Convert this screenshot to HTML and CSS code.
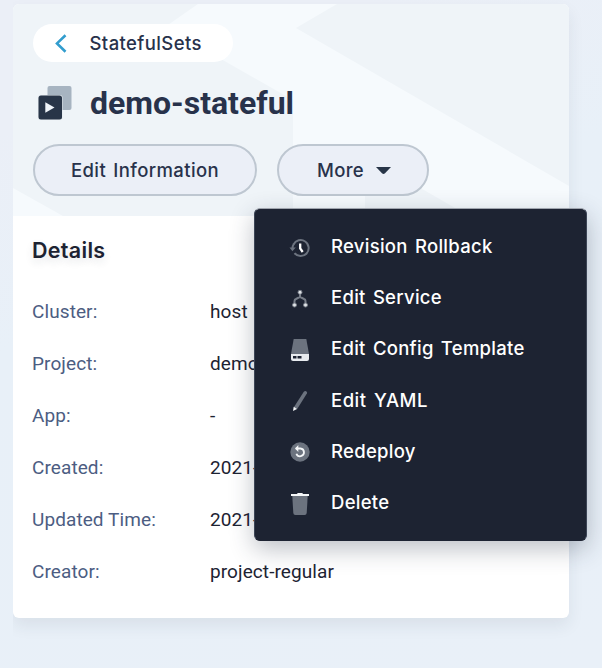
FILE: index.html
```html
<!DOCTYPE html>
<html lang="en">
<head>
<meta charset="utf-8">
<title>demo-stateful</title>
<link rel="stylesheet" href="styles.css">
</head>
<body>
<div class="pane">
<main class="card">
  <header class="hero">
    <svg class="hero-bg" viewBox="0 0 556 212" preserveAspectRatio="none" aria-hidden="true">
      <path fill="#f6fafd" d="M185 0H324L283 24L556 182V212H280V96L152 23ZM0 184L50 212H0Z"/>
      <path fill="#eff4f8" d="M352 152L456 212H352Z"/>
    </svg>
    <a class="back">
      <svg width="12" height="19" viewBox="0 0 12 19"><path d="M10.500 1.200L2 9.400l8.500 8.300" fill="none" stroke="#329dce" stroke-width="2.600"/></svg>
      <span class="back-text">StatefulSets</span>
    </a>
    <h1 class="title">
      <svg width="34" height="34" viewBox="0 0 34 34"><rect x="9.500" y="0" width="24" height="24" rx="2" fill="#a7b4c1"/><rect x="0" y="9" width="24.500" height="25" rx="2.500" fill="#e2e8ed"/><rect x=".5" y="9.500" width="23.500" height="24" rx="2.500" fill="#283548"/><path d="M7.300 16.300v10.400l9.200-5.200z" fill="#eff4f9"/></svg>
      <span class="title-text">demo-stateful</span>
    </h1>
    <div class="actions">
      <button class="btn btn-edit"><span class="edit-text">Edit Information</span></button>
      <button class="btn btn-more"><span class="more-text">More</span><svg width="15" height="8" viewBox="0 0 15 8"><path d="M0 0h15L9 6.300Q7.500 7.600 6 6.300z" fill="#283548"/></svg></button>
    </div>
  </header>
  <section class="details">
    <h2 class="heading">Details</h2>
    <dl class="list">
      <dt>Cluster:</dt><dd>host</dd>
      <dt>Project:</dt><dd>demo</dd>
      <dt>App:</dt><dd>-</dd>
      <dt>Created:</dt><dd>2021-</dd>
      <dt>Updated Time:</dt><dd>2021-</dd>
      <dt>Creator:</dt><dd>project-regular</dd>
    </dl>
  </section>
</main>
</div>
<ul class="menu">
  <li><svg viewBox="0 0 22 24"><path d="M4.500 8.500A8 8 0 1 1 5.500 17.200" fill="none" stroke="#6c737f" stroke-width="2"/><path d="M.5 11.600h6.300L3.400 15.200z" fill="#6c737f"/><path d="M3.500 12A8 8 0 0 1 4.800 8" fill="none" stroke="#6c737f" stroke-width="2"/><path d="M11.200 7.500v5l2.500 3.500" fill="none" stroke="#fff" stroke-width="2.300"/></svg><span>Revision Rollback</span></li>
  <li><svg viewBox="0 0 22 24"><path d="M11 5v5M5.500 18v-4q0-1.500 1.500-2l4-2.200 4 2.200q1.500.5 1.500 2v4" fill="none" stroke="#777d88" stroke-width="2"/><g fill="#dfe2e6" stroke="#777d88"><circle cx="11" cy="5.300" r="2"/><circle cx="5.500" cy="18" r="2"/><circle cx="16.500" cy="18" r="2"/></g></svg><span>Edit Service</span></li>
  <li><svg viewBox="0 0 22 24"><path d="M4.700 1h12.600L20 16H2z" fill="#6c737f"/><path d="M2 16h18v5q0 2-2 2H4q-2 0-2-2z" fill="#e8ebef"/><path d="M4 18h3.500v2.600H4zM8.500 18h4v2.600h-4z" fill="#1d2332"/></svg><span>Edit Config Template</span></li>
  <li><svg viewBox="0 0 22 24"><path d="M4.700 18.500L14.800 2.700q1.700-1.400 3.100.2.500.8 0 1.600L8 20.300z" fill="#6c737f"/><path d="M4.700 17.800L8 20.100 4 22z" fill="#f5f7f9"/></svg><span class="caps">Edit YAML</span></li>
  <li><svg viewBox="0 0 22 24"><circle cx="11" cy="12" r="9.700" fill="#6c737f"/><path d="M6.800 8.500h4.600a3.900 3.900 0 1 1-4 5.200" fill="none" stroke="#f5f7f9" stroke-width="1.800"/><path d="M9.300 5L6 8.500 9.300 12z" fill="#f5f7f9"/></svg><span>Redeploy</span></li>
  <li><svg viewBox="0 0 22 24"><path d="M3.300 4h15.400l-1 17q-.2 2-2 2H6.300q-1.800 0-2-2z" fill="#6c737f"/><path d="M2 2h6l.7-1h4.600l.7 1h6v2H2z" fill="#f5f7f9"/></svg><span>Delete</span></li>
</ul>
</body>
</html>
```
FILE: styles.css
```css
* { box-sizing: border-box; }
body {
  margin: 0;
  width: 602px;
  height: 668px;
  overflow: hidden;
  position: relative;
  background: linear-gradient(160deg, #ebeff7 0%, #ebeff7 15%, #e8f0f8 40%, #e9f0f8 100%);
  font-family: Inter, "Liberation Sans", sans-serif;
  color: #28324b;
}
.pane { margin-left: 13px; padding-top: 4px; height: 668px; overflow: hidden; }
.card {
  width: 556px;
  height: 614px;
  border-radius: 6px;
  background: #fff;
  box-shadow: 0 8px 16px rgba(36, 46, 66, .08);
}
.hero {
  position: relative;
  height: 212px;
  padding: 20px;
  background: #eff4f8;
  border-radius: 6px 6px 0 0;
  overflow: hidden;
}
.hero-bg { position: absolute; inset: 0; width: 100%; height: 100%; }
.back, .title, .actions { position: relative; }
.back {
  display: flex;
  align-items: center;
  width: 200px;
  height: 38px;
  padding-left: 22px;
  gap: 22.5px;
  border-radius: 19px;
  background: #fff;
  font-size: 18.5px;
  font-weight: 500;
  letter-spacing: .4px;
}
.title {
  display: flex;
  align-items: center;
  gap: 18px;
  height: 50px;
  margin: 16px 0 0;
  padding-left: 5px;
  font: 700 32px/50px Roboto, sans-serif;
}
.actions { display: flex; gap: 20px; margin-top: 16px; }
.btn {
  display: flex;
  align-items: center;
  justify-content: center;
  height: 52px;
  padding: 0 0 1px;
  border: 2px solid #bec7d1;
  border-radius: 26px;
  background: #ebeff7;
  color: #28324b;
  font: 500 18.5px Inter, sans-serif;
  letter-spacing: .38px;
  word-spacing: 2px;
}
.btn-edit { width: 224px; }
.btn-more { width: 152px; gap: 12px; padding-left: 2px; }
.btn-more svg { position: relative; top: 1px; }
.details { padding: 20px 19px; }
.heading {
  margin: 0;
  font-size: 21.5px;
  line-height: 28px;
  font-weight: 600;
  letter-spacing: .3px;
  color: #1d2332;
  text-shadow: 0 4px 8px rgba(36, 46, 66, .12);
}
.list {
  display: grid;
  grid-template-columns: 178px 1fr;
  grid-auto-rows: 52px;
  margin: 22px 0 0;
  font: 400 19px/52px Roboto, sans-serif;
  letter-spacing: .09px;
}
dt { color: #4c5d82; }
dd { margin: 0; color: #1d2332; white-space: nowrap; }
.menu {
  position: absolute;
  left: 254px;
  top: 208px;
  width: 333px;
  height: 333px;
  margin: 0;
  padding: 12px 0 0 33.5px;
  list-style: none;
  border-radius: 6px;
  background: #1d2332;
  border: 1px solid #3c4556;
  border-top-color: #a0a5ae;
  border-bottom-color: #1d2332;
  box-shadow: 0 8px 24px rgba(36, 46, 66, .3);
  color: #fff;
  font-size: 18.5px;
  font-weight: 500;
  letter-spacing: .28px;
  word-spacing: 2px;
}
.menu li { display: flex; align-items: center; height: 51.2px; gap: 20.5px; }
.menu li span { padding-bottom: 1px; }
.menu .caps { letter-spacing: .5px; }
.menu svg { width: 22px; height: 24px; position: relative; top: 1px; }
```
